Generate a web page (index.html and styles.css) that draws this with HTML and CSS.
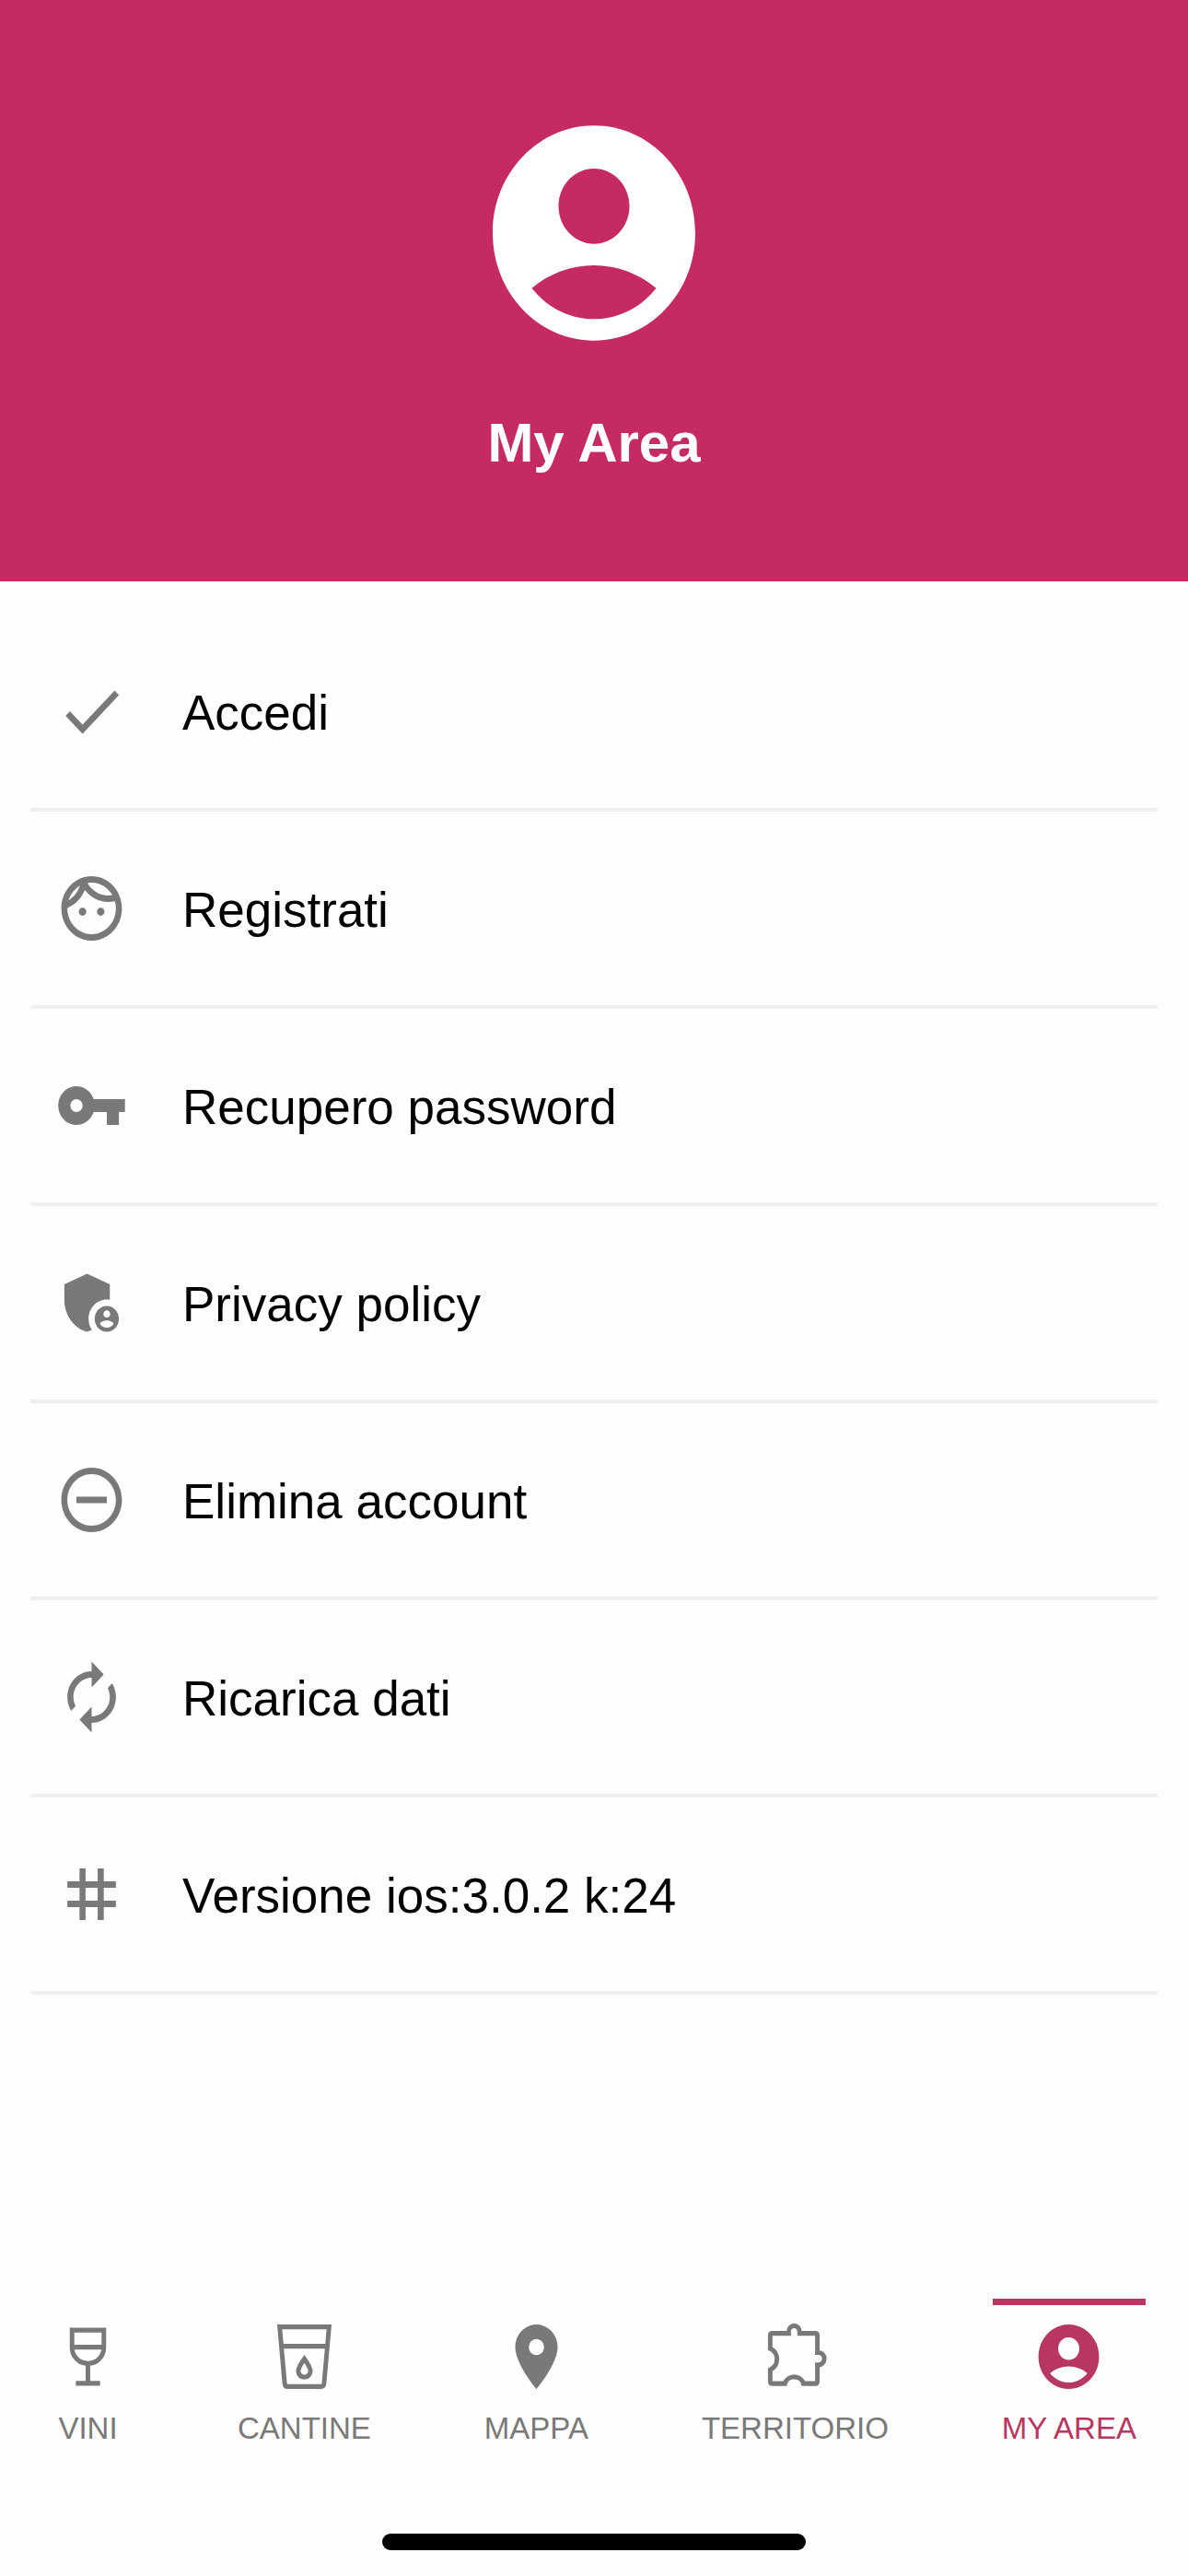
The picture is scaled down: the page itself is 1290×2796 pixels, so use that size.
FILE: index.html
```html
<!DOCTYPE html>
<html lang="it">
<head>
    <meta charset="UTF-8">
    <meta name="viewport" content="width=device-width, initial-scale=1.0">
    <title>My Area</title>
    <link rel="stylesheet" href="styles.css">
</head>
<body>
    <header class="header">
        <svg class="avatar" viewBox="0 0 24 24" preserveAspectRatio="none" aria-hidden="true">
            <path d="M12 2C6.48 2 2 6.48 2 12s4.48 10 10 10 10-4.48 10-10S17.52 2 12 2zm0 4c1.93 0 3.5 1.57 3.5 3.5S13.93 13 12 13s-3.5-1.57-3.5-3.5S10.07 6 12 6zm0 14c-2.03 0-4.43-.82-6.14-2.88C7.55 15.8 9.68 15 12 15s4.45.8 6.14 2.12C16.43 19.18 14.03 20 12 20z"/>
        </svg>
        <h1 class="title">My Area</h1>
    </header>

    <main class="content">
        <ul class="menu">
            <li>
                <a class="menu-item" href="#accedi">
                    <svg class="icon" viewBox="0 0 24 24" preserveAspectRatio="none" aria-hidden="true">
                        <path d="M9 16.17 4.83 12l-1.42 1.41L9 19 21 7l-1.41-1.41z"/>
                    </svg>
                    <span class="menu-label">Accedi</span>
                </a>
            </li>
            <li>
                <a class="menu-item" href="#registrati">
                    <svg class="icon" viewBox="0 0 24 24" preserveAspectRatio="none" aria-hidden="true">
                        <path d="M10.25 13c0 .69-.56 1.25-1.25 1.25S7.75 13.69 7.75 13s.56-1.25 1.25-1.25 1.25.56 1.25 1.25zM15 11.75c-.69 0-1.25.56-1.25 1.25s.56 1.25 1.25 1.25 1.25-.56 1.25-1.25-.56-1.25-1.25-1.25zm7 .25c0 5.52-4.48 10-10 10S2 17.52 2 12 6.48 2 12 2s10 4.48 10 10zM10.66 4.12C12.06 6.44 14.6 8 17.5 8c.46 0 .91-.05 1.34-.12C17.44 5.56 14.9 4 12 4c-.46 0-.91.05-1.34.12zM4.42 9.47c1.71-.97 3.03-2.55 3.66-4.44C6.37 6 5.05 7.58 4.42 9.47zM20 12c0-.78-.12-1.53-.33-2.24-.7.15-1.42.24-2.17.24-3.13 0-5.92-1.44-7.76-3.69C8.69 8.87 6.6 10.88 4 11.86c.01.04 0 .09 0 .14 0 4.41 3.59 8 8 8s8-3.59 8-8z"/>
                    </svg>
                    <span class="menu-label">Registrati</span>
                </a>
            </li>
            <li>
                <a class="menu-item" href="#password">
                    <svg class="icon" viewBox="0 0 24 24" preserveAspectRatio="none" aria-hidden="true">
                        <path d="M12.65 10C11.83 7.67 9.61 6 7 6c-3.31 0-6 2.69-6 6s2.69 6 6 6c2.61 0 4.83-1.67 5.65-4H17v4h4v-4h2v-4H12.65zM7 14c-1.1 0-2-.9-2-2s.9-2 2-2 2 .9 2 2-.9 2-2 2z"/>
                    </svg>
                    <span class="menu-label">Recupero password</span>
                </a>
            </li>
            <li>
                <a class="menu-item" href="#privacy">
                    <svg class="icon" viewBox="0 0 24 24" preserveAspectRatio="none" aria-hidden="true">
                        <path d="M17 11c.34 0 .67.04 1 .09V6.27L10.5 3 3 6.27v4.91c0 4.54 3.2 8.79 7.5 9.82.55-.13 1.08-.32 1.6-.55-.69-.98-1.1-2.17-1.1-3.45 0-3.31 2.69-6 6-6z"/>
                        <path d="M17 13c-2.21 0-4 1.79-4 4s1.79 4 4 4 4-1.79 4-4-1.79-4-4-4zm0 1.38c.62 0 1.12.51 1.12 1.12s-.51 1.12-1.12 1.12-1.12-.51-1.12-1.12.5-1.12 1.12-1.12zm0 5.37c-.93 0-1.74-.46-2.24-1.17.05-.72 1.51-1.08 2.24-1.08s2.19.36 2.24 1.08c-.5.71-1.31 1.17-2.24 1.17z"/>
                    </svg>
                    <span class="menu-label">Privacy policy</span>
                </a>
            </li>
            <li>
                <a class="menu-item" href="#elimina">
                    <svg class="icon" viewBox="0 0 24 24" preserveAspectRatio="none" aria-hidden="true">
                        <path d="M7 11v2h10v-2H7zm5-9C6.48 2 2 6.48 2 12s4.48 10 10 10 10-4.48 10-10S17.52 2 12 2zm0 18c-4.41 0-8-3.59-8-8s3.59-8 8-8 8 3.59 8 8-3.59 8-8 8z"/>
                    </svg>
                    <span class="menu-label">Elimina account</span>
                </a>
            </li>
            <li>
                <a class="menu-item" href="#ricarica">
                    <svg class="icon" viewBox="0 0 24 24" preserveAspectRatio="none" aria-hidden="true">
                        <path d="M12 6v3l4-4-4-4v3c-4.42 0-8 3.58-8 8 0 1.57.46 3.03 1.24 4.26L6.7 14.8c-.45-.83-.7-1.79-.7-2.8 0-3.31 2.69-6 6-6zm6.76 1.74L17.3 9.2c.44.84.7 1.79.7 2.8 0 3.31-2.69 6-6 6v-3l-4 4 4 4v-3c4.42 0 8-3.58 8-8 0-1.57-.46-3.03-1.24-4.26z"/>
                    </svg>
                    <span class="menu-label">Ricarica dati</span>
                </a>
            </li>
            <li>
                <a class="menu-item" href="#versione">
                    <svg class="icon" viewBox="0 0 24 24" preserveAspectRatio="none" aria-hidden="true">
                        <path d="M20 10V8h-4V4h-2v4h-4V4H8v4H4v2h4v4H4v2h4v4h2v-4h4v4h2v-4h4v-2h-4v-4h4zm-6 4h-4v-4h4v4z"/>
                    </svg>
                    <span class="menu-label">Versione ios:3.0.2 k:24</span>
                </a>
            </li>
        </ul>
    </main>

    <nav class="tabs">
        <a class="tab" href="#vini">
            <svg class="icon icon-line" viewBox="0 0 24 24" preserveAspectRatio="none" aria-hidden="true">
                <path d="M6.75 3.75h10.5V9c0 2.9-2.2 5.1-5.25 5.1S6.75 11.9 6.75 9zM6.75 9h10.5M12 14.1v6M8 20.25h8"/>
            </svg>
            <span class="tab-label">VINI</span>
        </a>
        <a class="tab" href="#cantine">
            <svg class="icon icon-line" viewBox="0 0 24 24" preserveAspectRatio="none" aria-hidden="true">
                <path d="M3.85 2.75h16.3l-1.65 17.5q-.1 1-1 1h-11q-.9 0-1-1zM4.5 8.75h15"/>
                <path d="M12 12.65c-1 1.3-2 2.6-2 3.8a2 1.9 0 0 0 4 0c0-1.2-1-2.5-2-3.8z"/>
            </svg>
            <span class="tab-label">CANTINE</span>
        </a>
        <a class="tab" href="#mappa">
            <svg class="icon" viewBox="0 0 24 24" preserveAspectRatio="none" aria-hidden="true">
                <path d="M12 2C8.13 2 5 5.13 5 9c0 5.25 7 13 7 13s7-7.75 7-13c0-3.87-3.13-7-7-7zm0 9.5c-1.38 0-2.5-1.12-2.5-2.5s1.12-2.5 2.5-2.5 2.5 1.12 2.5 2.5-1.12 2.5-2.5 2.5z"/>
            </svg>
            <span class="tab-label">MAPPA</span>
        </a>
        <a class="tab" href="#territorio">
            <svg class="icon icon-line" viewBox="0 0 24 24" preserveAspectRatio="none" aria-hidden="true">
                <path d="M4.5 4.75h5.35V4.2a1.8 1.8 0 0 1 3.6 0v.55h5.15q.7 0 .7.7v5.2h.35a1.95 1.95 0 0 1 0 3.9h-.35v5.1q0 .7-.7.7h-3.9a3.15 2.8 0 0 0-6.1 0H4.5q-.75 0-.75-.7v-3.6a3.7 3.6 0 0 0 0-6.6v-4q0-.7.75-.7z"/>
            </svg>
            <span class="tab-label">TERRITORIO</span>
        </a>
        <a class="tab tab-active" href="#my-area" aria-current="page">
            <svg class="icon" viewBox="0 0 24 24" preserveAspectRatio="none" aria-hidden="true">
                <path d="M12 2C6.48 2 2 6.48 2 12s4.48 10 10 10 10-4.48 10-10S17.52 2 12 2zm0 4c1.93 0 3.5 1.57 3.5 3.5S13.93 13 12 13s-3.5-1.57-3.5-3.5S10.07 6 12 6zm0 14c-2.03 0-4.43-.82-6.14-2.88C7.55 15.8 9.68 15 12 15s4.45.8 6.14 2.12C16.43 19.18 14.03 20 12 20z"/>
            </svg>
            <span class="tab-label">MY AREA</span>
        </a>
    </nav>
    <div class="home-bar"></div>
</body>
</html>
```
FILE: styles.css
```css
* {
    box-sizing: border-box;
}

body {
    margin: 0;
    min-height: 100vh;
    display: flex;
    flex-direction: column;
    background-color: #fefefe;
    font-family: "Liberation Sans", Arial, sans-serif;
    color: #000;
}

a {
    color: inherit;
    text-decoration: none;
}

/* header */
.header {
    display: flex;
    flex-direction: column;
    align-items: center;
    gap: 52px;
    padding: 113px 0 114px;
    background-color: #c52a62;
    color: #fff;
}

.avatar {
    width: 264px;
    height: 280px;
    fill: currentColor;
}

.title {
    margin: 0;
    font-size: 60px;
    line-height: 72px;
    font-weight: bold;
}

/* menu */
.content {
    flex: 1;
    padding: 36px 33px;
}

.menu {
    list-style: none;
    margin: 0;
    padding: 0;
}

.menu-item {
    display: flex;
    align-items: center;
    gap: 59px;
    height: 214px;
    padding-left: 27px;
    border-bottom: 4px solid #efefef;
}

.icon {
    width: 79px;
    height: 84px;
    fill: #797979;
}

.icon-line {
    fill: none;
    stroke: #797979;
    stroke-width: 1.5;
}

.menu-label {
    padding-top: 4px;
    font-size: 53px;
    line-height: 60px;
}

/* bottom tabs */
.tabs {
    display: flex;
    justify-content: space-between;
    padding: 0 46px;
}

.tab {
    display: flex;
    flex-direction: column;
    align-items: center;
    gap: 16px;
    padding: 14px 10px 0;
    border-top: 7px solid transparent;
    color: #797979;
}

.tab-active {
    border-top-color: #b73761;
    color: #b73761;
}

.tab-active .icon {
    fill: #b73761;
}

.tab-label {
    font-size: 33px;
    line-height: 40px;
}

.home-bar {
    width: 460px;
    height: 18px;
    margin: 94px auto 28px;
    border-radius: 9px;
    background-color: #000;
}
```
